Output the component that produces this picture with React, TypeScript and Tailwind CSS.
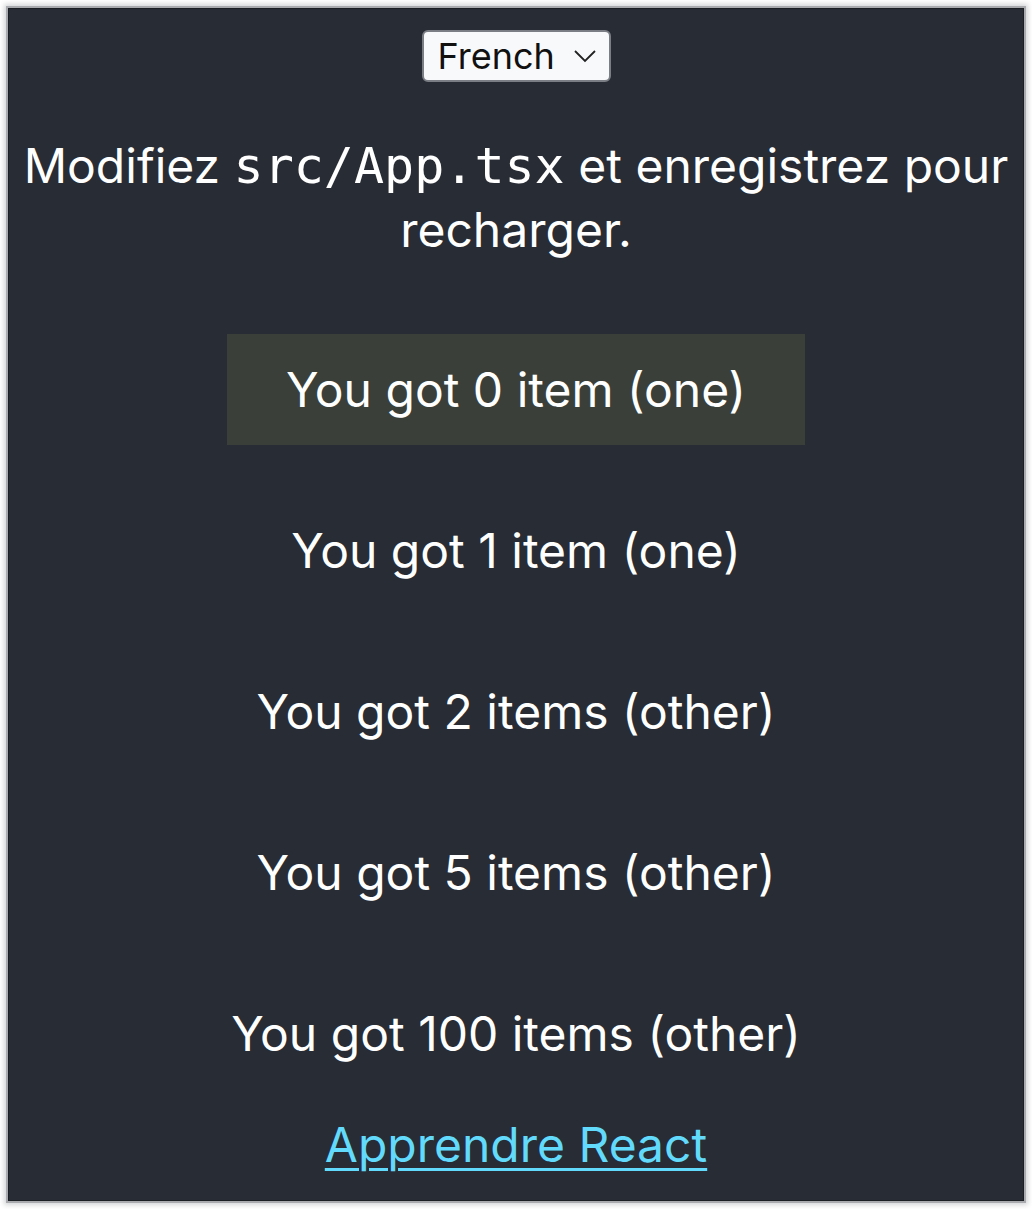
import React from "react";

const rows = [
  { text: "You got 0 item (one)", active: true },
  { text: "You got 1 item (one)", active: false },
  { text: "You got 2 items (other)", active: false },
  { text: "You got 5 items (other)", active: false },
  { text: "You got 100 items (other)", active: false },
];

export default function App() {
  return (
    <div className="w-[1032px] h-[1209px] bg-white p-2">
      <div
        className="h-full bg-[#282c34] border border-[#1c1f24] shadow-[0_0_0_2px_#a9abae,0_0_5px_4px_#d4d5d7] flex flex-col items-center text-white"
        style={{ fontFamily: "Inter, 'Noto Sans', sans-serif" }}
      >
        <div className="mt-[21px] w-[189px] h-[52px] bg-[#f8f9fb] border-2 border-[#7b7f85] rounded-[6px] flex items-center pl-[14px] pr-[12px] text-[#111] text-[36px] leading-none">
          <span className="flex-1">French</span>
          <svg width="24" height="14" viewBox="0 0 24 14" fill="none">
            <path d="M2 2 L12 12 L22 2" stroke="#222" strokeWidth="1.8" />
          </svg>
        </div>

        <p className="mt-[52px] text-[48px] leading-[63px] text-center px-1">
          Modifiez{" "}
          <code
            className="text-[50px] leading-[63px]"
            style={{ fontFamily: "'DejaVu Sans Mono', monospace" }}
          >
            src/App.tsx
          </code>{" "}
          et enregistrez pour recharger.
        </p>

        <div className="mt-[73px] flex flex-col items-center gap-[50px]">
          {rows.map((r) => (
            <div
              key={r.text}
              className={
                "px-[59px] py-[27px] text-[48px] leading-[57px] " +
                (r.active ? "bg-[#3a3f3a]" : "")
              }
            >
              {r.text}
            </div>
          ))}
        </div>

        <a
          href="#"
          className="mt-[27px] text-[48px] leading-[57px] text-[#61dafb] underline decoration-[3px] underline-offset-[6px]"
        >
          Apprendre React
        </a>
      </div>
    </div>
  );
}
